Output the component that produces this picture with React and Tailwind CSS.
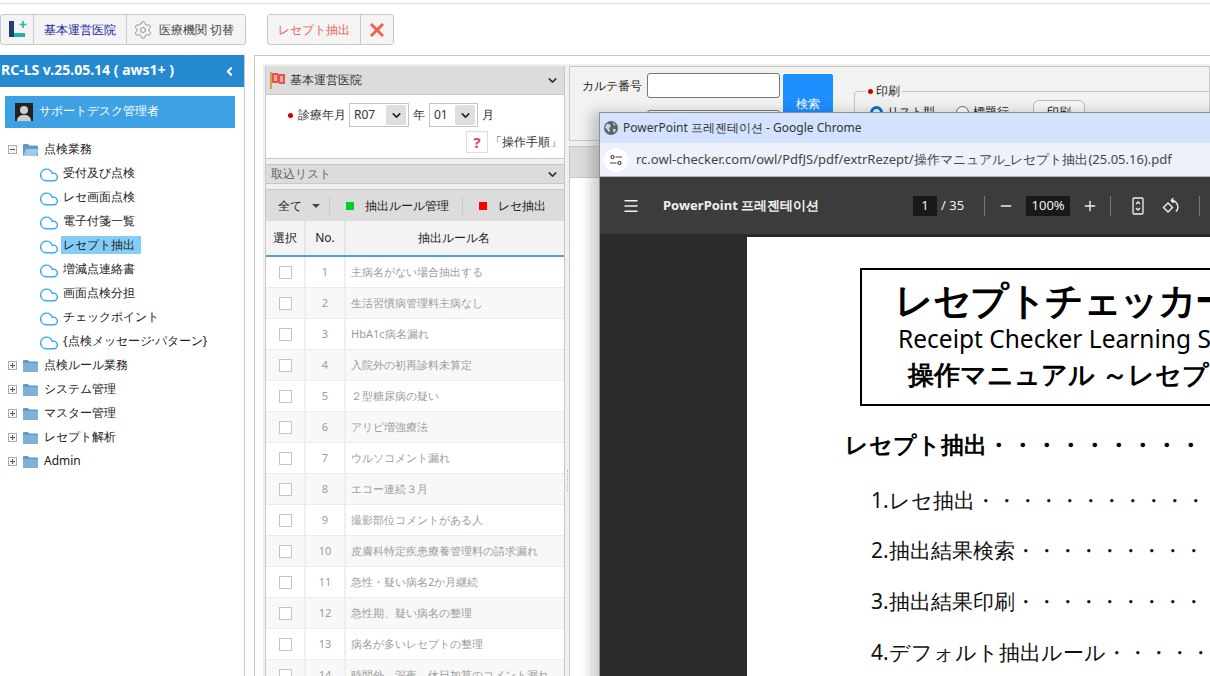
import { Cloud, Settings, ChevronLeft, ChevronDown, Menu, Minus, Plus } from "lucide-react";

const font = "font-['Noto_Sans_CJK_JP','Liberation_Sans',sans-serif]";

const treeItems = ["受付及び点検", "レセ画面点検", "電子付箋一覧", "レセプト抽出", "増減点連絡書", "画面点検分担", "チェックポイント", "{点検メッセージ·パターン}"];
const folders = ["点検ルール業務", "システム管理", "マスター管理", "レセプト解析", "Admin"];
const rules = [
  "主病名がない場合抽出する",
  "生活習慣病管理料主病なし",
  "HbA1c病名漏れ",
  "入院外の初再診料未算定",
  "２型糖尿病の疑い",
  "アリピ増強療法",
  "ウルソコメント漏れ",
  "エコー連続３月",
  "撮影部位コメントがある人",
  "皮膚科特定疾患療養管理料の請求漏れ",
  "急性・疑い病名2か月継続",
  "急性期、疑い病名の整理",
  "病名が多いレセプトの整理",
  "時間外、深夜、休日加算のコメント漏れ",
];

const FolderIcon = ({ open }) => (
  <svg width="16" height="13" viewBox="0 0 16 13" className="shrink-0">
    <path d="M0 2a1 1 0 0 1 1-1h4l1.5 1.5H14a1 1 0 0 1 1 1V12a1 1 0 0 1-1 1H1a1 1 0 0 1-1-1z" fill="#5f9ccb" />
    {open ? <path d="M3 6h13l-2.5 7H0.5z" fill="#a5c8e4" /> : <rect x="0" y="4" width="15" height="9" rx="1" fill="#7fb0d6" />}
  </svg>
);

const ExpandBox = ({ open }) => (
  <span className="w-[9px] h-[9px] border border-[#9fb0bd] bg-[#f4f6f8] flex items-center justify-center shrink-0">
    <span className="relative w-[5px] h-px bg-[#555]">
      {!open && <span className="absolute left-[2px] -top-[2px] w-px h-[5px] bg-[#555]" />}
    </span>
  </span>
);

const FlagIcon = () => (
  <svg width="17" height="18" viewBox="0 0 17 18" className="shrink-0">
    <rect x="0" y="1" width="2" height="17" fill="#c9a24a" />
    <path d="M2 2h6v1h7v10H9v-1H2z" fill="#e2574c" />
    <path d="M4 4h3v6H4zM10 5h3v6h-3z" fill="#f5a79e" />
  </svg>
);

const SelectBox = ({ value, width }) => (
  <div className={`${width} h-[24px] border border-[#c4c4c4] bg-white flex items-center justify-between pl-1 pr-[2px] text-[12px] text-[#333]`}>
    {value}
    <span className="w-5 h-5 bg-[#dedede] rounded-[2px] flex items-center justify-center">
      <ChevronDown size={13} strokeWidth={3} className="text-[#222]" />
    </span>
  </div>
);

const Sidebar = () => (
  <aside className="w-[245px] shrink-0 border-r border-[#c8c8c8] flex flex-col">
    <div className="h-[32px] bg-[#2489cf] flex items-center justify-between pr-2 pl-px text-white">
      <span className="font-['DejaVu_Sans',sans-serif] font-bold text-[14px] whitespace-nowrap -mt-[4px]">RC-LS v.25.05.14 ( aws1+ )</span>
      <ChevronLeft size={13} strokeWidth={4} />
    </div>
    <div className="mt-[9px] ml-[5px] mr-[9px] h-[32px] bg-[#3da1e4] flex items-center gap-[6px] pl-[10px] pb-[3px] text-white text-[12px]">
      <svg width="18" height="18" viewBox="0 0 18 18" className="mt-[3px]">
        <rect width="18" height="18" fill="#222" />
        <circle cx="9" cy="7" r="4" fill="#ccc" />
        <path d="M2 18c0-5 4-6 7-6s7 1 7 6z" fill="#ccc" />
      </svg>
      サポートデスク管理者
    </div>
    <div className="mt-[9px] pl-[8px] text-[12px] text-[#222]">
      <div className="h-6 flex items-center gap-[6px]">
        <ExpandBox open />
        <FolderIcon open />
        <span className="-ml-[1px]">点検業務</span>
      </div>
      {treeItems.map((t, i) => (
        <div key={t} className="h-6 flex items-center pl-[31px] gap-[2px]">
          <Cloud size={20} strokeWidth={1.8} className="text-[#3fa9f5] mt-[3px]" />
          <span className={`px-[2px] h-[18px] leading-[18px] whitespace-nowrap ${i === 3 ? "bg-[#85cdf9] w-[80px]" : ""}`}>{t}</span>
        </div>
      ))}
      {folders.map((t) => (
        <div key={t} className="h-6 flex items-center gap-[6px]">
          <ExpandBox />
          <FolderIcon />
          <span className="-ml-[1px]">{t}</span>
        </div>
      ))}
    </div>
  </aside>
);

const RulePanel = () => (
  <section className="w-[300px] shrink-0 flex flex-col text-[12px] text-[#333] border-x border-[#c8c8c8]">
    <div className="h-[29px] shrink-0 bg-[#dcdcdc] border-b border-[#c8c8c8] flex items-center justify-between px-[4px] pr-[5px]">
      <div className="flex items-center gap-[3px] font-medium">
        <FlagIcon />
        基本運営医院
      </div>
      <ChevronDown size={13} strokeWidth={3} className="text-[#333]" />
    </div>
    <div className="h-[64px] shrink-0 bg-white border-b border-[#c8c8c8] pt-[8px] pr-[2px]">
      <div className="flex items-center pl-[22px]">
        <span className="w-[5px] h-[5px] rounded-full bg-[#c90000] mr-[5px]" />
        診療年月
        <span className="ml-[3px]"><SelectBox value="R07" width="w-[60px]" /></span>
        <span className="mx-[4px]">年</span>
        <SelectBox value="01" width="w-[49px]" />
        <span className="ml-[4px]">月</span>
      </div>
      <div className="flex items-center justify-end gap-[2px] mt-[4px]">
        <span className="w-[22px] h-[22px] border border-[#ddd] flex items-center justify-center text-[#e6395f] font-bold text-[15px]">?</span>
        「操作手順」
      </div>
    </div>
    <div className="h-[5px] shrink-0" />
    <div className="h-[20px] shrink-0 bg-[#dcdcdc] border-y border-[#c8c8c8] flex items-center justify-between pl-[5px] pr-[5px] text-[#666]">
      取込リスト
      <ChevronDown size={13} strokeWidth={3} className="text-[#333]" />
    </div>
    <div className="h-[5px] shrink-0" />
    <div className="h-[32px] shrink-0 bg-[#dcdcdc] border-t border-[#c8c8c8] flex items-center pl-[12px] text-[#222]">
      全て
      <span className="ml-[10px] w-0 h-0 border-x-[4px] border-x-transparent border-t-[4px] border-t-[#444]" />
      <span className="ml-[9px] w-px h-[18px] bg-[#bccbd6]" />
      <span className="ml-[16px] w-2 h-2 bg-[#00d030]" />
      <span className="ml-[11px]">抽出ルール管理</span>
      <span className="ml-[13px] w-px h-[18px] bg-[#bccbd6]" />
      <span className="ml-[16px] w-2 h-2 bg-[#ff0000]" />
      <span className="ml-[11px]">レセ抽出</span>
    </div>
    <div className="h-[36px] shrink-0 bg-[#f3f3f3] border-b-2 border-[#4da3e0] flex items-center text-[#222]">
      <div className="w-[40px] h-full border-r-2 border-[#e6e6e6] flex items-center justify-center">選択</div>
      <div className="w-[40px] h-full border-r-2 border-[#e6e6e6] flex items-center justify-center">No.</div>
      <div className="flex-1 text-center pr-[2px]">抽出ルール名</div>
    </div>
    {rules.map((r, i) => (
      <div key={r} className={`h-[31px] shrink-0 flex items-center border-b border-[#ececec] text-[11px] text-[#9c9c9c] ${i % 2 ? "bg-[#f8f8f8]" : "bg-white"}`}>
        <div className="w-[40px] h-full border-r-2 border-[#efefef] flex items-center justify-center">
          <span className="w-[13px] h-[13px] border border-[#c4c4c4] bg-white" />
        </div>
        <div className="w-[40px] h-full border-r-2 border-[#efefef] flex items-center justify-center">{i + 1}</div>
        <div className="flex-1 pl-[5px] whitespace-nowrap">{r}</div>
      </div>
    ))}
  </section>
);

const SearchPanel = () => (
  <section className="flex-1 min-w-0 flex flex-col">
    <div className="h-[75px] shrink-0 bg-[#f2f2f1] border border-[#c8c8c8] flex text-[12px] text-[#222] overflow-hidden pl-[12px]">
      <div className="pt-[6px] flex flex-col items-end whitespace-nowrap">
        <div className="flex items-center gap-[5px]">
          カルテ番号
          <span className="w-[133px] h-[25px] bg-white border border-[#777] rounded-[3px]" />
        </div>
        <div className="flex items-center gap-[5px] mt-[12px]">
          患者名
          <span className="w-[133px] h-[25px] bg-white border border-[#777] rounded-[3px]" />
        </div>
      </div>
      <div className="ml-[3px] mt-[7px] w-[50px] h-[60px] shrink-0 bg-[#1e8fff] rounded-[2px] text-white flex items-center justify-center">検索</div>
      <fieldset className="ml-[21px] mt-[15px] w-[400px] h-[60px] shrink-0 border border-[#c4c4c4] rounded-[3px] pl-[15px]">
        <legend className="ml-[-4px] px-[2px] flex items-center gap-[3px]">
          <span className="w-[5px] h-[5px] rounded-full bg-[#c90000]" />
          印刷
        </legend>
        <div className="flex items-center gap-[4px]">
          <span className="w-[13px] h-[13px] rounded-full border-[3px] border-[#0a6ed1]" />
          <span className="mr-[17px]">リスト型</span>
          <span className="w-[13px] h-[13px] rounded-full border border-[#666] bg-white" />
          <span className="mr-[20px]">標題行</span>
          <span className="w-[52px] h-[24px] border border-[#bbb] rounded-t-[6px] bg-[#f7f7f7] flex items-center justify-center">印刷</span>
        </div>
      </fieldset>
    </div>
    <div className="mt-[5px] h-[32px] shrink-0 bg-[#dcdcdc] border border-[#c8c8c8]" />
    <div className="flex-1 bg-white border-x border-[#c8c8c8]" />
  </section>
);

// overlapping popup, sits on top of the page like a real window
const ChromeWindow = () => (
  <div className="absolute left-[599px] top-[112px] w-[700px] h-[600px] flex flex-col border-l border-t border-[#8f9193] shadow-[-8px_0_12px_rgba(0,0,0,0.2)]">
    <div className="h-[30px] shrink-0 bg-[#d3e3fd] flex items-center pl-[4px] gap-[5px] text-[12px] text-[#333] font-['Liberation_Sans','Noto_Sans_CJK_KR',sans-serif]">
      <svg width="14" height="14" viewBox="0 0 14 14">
        <circle cx="7" cy="7" r="7" fill="#5f6368" />
        <path d="M3 2.500l3 1 1 2-2 1.500 1 2.500-1 2-2-3-2-2zM9 1.500l2.500 2-1.500 1.500zM9 8l3 0-1.500 3.500-1.500-1z" fill="#c7d3e6" />
      </svg>
      PowerPoint 프레젠테이션 - Google Chrome
    </div>
    <div className="h-[34px] shrink-0 bg-[#edf2fa] border-b border-[#aeb3ba] flex items-center pl-[4px] gap-[8px] text-[13px] text-[#444]">
      <span className="w-6 h-6 rounded-full bg-white flex items-center justify-center">
        <svg width="12" height="12" viewBox="0 0 12 12" fill="none" stroke="#444" strokeWidth="1.2">
          <circle cx="2.500" cy="3" r="1.500" />
          <path d="M5.500 3H12M0 9h6.500" />
          <circle cx="9.500" cy="9" r="1.500" />
        </svg>
      </span>
      <span className="whitespace-nowrap">rc.owl-checker.com/owl/PdfJS/pdf/extrRezept/操作マニュアル_レセプト抽出(25.05.16).pdf</span>
    </div>
    <div className="h-[57px] shrink-0 bg-[#3c3c3c] flex items-center pl-[22px] text-[#f1f1f1] text-[13px] font-['Roboto','Noto_Sans_CJK_KR',sans-serif]">
      <Menu size={18} strokeWidth={2} />
      <span className="ml-[23px] font-bold w-[250px]">PowerPoint 프레젠테이션</span>
      <span className="w-[24px] h-5 bg-[#191919] flex items-center justify-center">1</span>
      <span className="ml-[4px]">/ 35</span>
      <span className="ml-[20px] w-px h-5 bg-[#777]" />
      <Minus size={16} className="ml-[13px]" />
      <span className="ml-[12px] w-[44px] h-5 bg-[#191919] flex items-center justify-center">100%</span>
      <Plus size={16} className="ml-[12px]" />
      <span className="ml-[12px] w-px h-5 bg-[#777]" />
      <svg width="12" height="18" viewBox="0 0 12 18" fill="none" stroke="#f1f1f1" strokeWidth="1.3" className="ml-[21px]">
        <rect x="1" y="1" width="10" height="16" rx="1" />
        <path d="M4 7l2-2 2 2M4 11l2 2 2-2" />
      </svg>
      <svg width="18" height="18" viewBox="0 0 18 18" fill="none" stroke="#f1f1f1" strokeWidth="1.4" className="ml-[18px]">
        <path d="M6 6L1.500 10.500 6 15l4.500-4.500z" />
        <path d="M9 3.500a6.500 6.500 0 0 1 5 11M9 3.500l2.500-2.200M9 3.500l2.500 2.200" />
      </svg>
      <span className="ml-[19px] w-px h-5 bg-[#777]" />
    </div>
    <div className="flex-1 bg-[#2a2a2a] pl-[147px] pt-[3px]">
      <div className="h-full bg-white text-black pl-[98px] pt-[31px] font-['Noto_Sans_CJK_JP','DejaVu_Sans',sans-serif] whitespace-nowrap">
        <div className="w-[420px] h-[138px] ml-[15px] border-2 border-black border-r-0 pl-[36px] flex flex-col">
          <div className="text-[38px] leading-[50px] font-bold mt-[4px] -ml-[3px] tracking-[-1.500px]">レセプトチェッカー</div>
          <div className="text-[24.500px] leading-[29px] font-['DejaVu_Sans',sans-serif]">Receipt Checker Learning System</div>
          <div className="text-[26px] leading-[40px] font-bold mt-[1px] ml-[10px]">操作マニュアル ～レセプト抽出～</div>
        </div>
        <div className="text-[23px] leading-[30px] font-bold mt-[23px]">レセプト抽出<span className="tracking-[1px]">・・・・・・・・・・・・・・・・</span></div>
        <div className="pl-[26px] text-[21px] leading-[30px] text-[#111]">
          <div className="mt-[26px]">1.レセ抽出・・・・・・・・・・・・・・・・・</div>
          <div className="mt-[20px]">2.抽出結果検索・・・・・・・・・・・・・・・</div>
          <div className="mt-[21px]">3.抽出結果印刷・・・・・・・・・・・・・・・</div>
          <div className="mt-[21px]">4.デフォルト抽出ルール・・・・・・・・・・・</div>
        </div>
      </div>
    </div>
  </div>
);

export default function App() {
  return (
    <div className={`relative w-[1210px] h-[676px] overflow-hidden bg-white flex flex-col ${font}`}>
      <div className="h-[4px] shrink-0 border-b border-[#e0e0e0]" />
      <div className="h-[51px] shrink-0 pt-[10px] flex items-start text-[12px]">
        <div className="h-[31px] flex border border-[#c8c8c8] rounded-[3px] bg-[#f4f4f4] overflow-hidden">
          <div className="w-[33px] border-r border-[#c8c8c8] flex items-center justify-center">
            <svg width="19" height="20" viewBox="0 0 19 20">
              <path d="M1 1h5v12h11v4H1z" fill="#1f3f77" />
              <path d="M6 13h11v4H6z" fill="#1cb5a8" />
              <path d="M15 1v7M11.500 4.500h7" stroke="#1cb5a8" strokeWidth="1.6" />
            </svg>
          </div>
          <div className="w-[93px] border-r border-[#c8c8c8] flex items-center justify-center text-[#1a1aa6]">基本運営医院</div>
          <div className="w-[118px] flex items-center pl-[6px] gap-[6px] text-[#444] whitespace-nowrap">
            <Settings size={20} strokeWidth={1.1} className="text-[#888]" />
            医療機関 切替
          </div>
        </div>
        <div className="ml-[21px] h-[31px] flex border border-[#c8c8c8] rounded-[3px] bg-[#f4f4f4] overflow-hidden">
          <div className="w-[93px] border-r border-[#c8c8c8] flex items-center justify-center text-[#f0605a]">レセプト抽出</div>
          <div className="w-[32px] flex items-center justify-center">
            <svg width="16" height="16" viewBox="0 0 16 16">
              <path d="M3 1l5 5 5-5 2 2-5 5 5 5-2 2-5-5-5 5-2-2 5-5-5-5z" fill="#f0604a" stroke="#f7a08f" strokeWidth="0.5" />
            </svg>
          </div>
        </div>
      </div>
      <div className="flex-1 min-h-0 flex">
        <Sidebar />
        <main className="ml-[9px] flex-1 min-w-0 border-l border-t border-[#c8c8c8] pl-[8px] pt-[8px]">
          <div className="h-full bg-[#f0f0f0] pl-[2px] pt-[2px] flex overflow-hidden">
            <RulePanel />
            <div className="w-[4px] shrink-0 pt-[404px] flex justify-center">
              <span className="h-[22px] border-l border-dotted border-[#bbb]" />
            </div>
            <SearchPanel />
          </div>
        </main>
      </div>
      <ChromeWindow />
    </div>
  );
}
